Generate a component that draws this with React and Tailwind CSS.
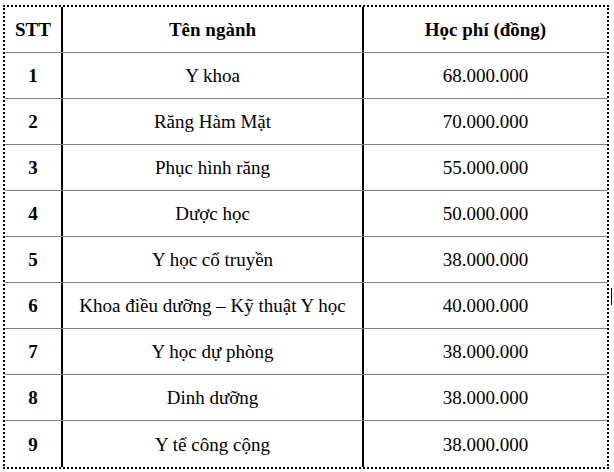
import React from 'react';

const rows = [
  ['1', 'Y khoa', '68.000.000'],
  ['2', 'Răng Hàm Mặt', '70.000.000'],
  ['3', 'Phục hình răng', '55.000.000'],
  ['4', 'Dược học', '50.000.000'],
  ['5', 'Y học cổ truyền', '38.000.000'],
  ['6', 'Khoa điều dưỡng – Kỹ thuật Y học', '40.000.000'],
  ['7', 'Y học dự phòng', '38.000.000'],
  ['8', 'Dinh dưỡng', '38.000.000'],
  ['9', 'Y tế công cộng', '38.000.000'],
];

const Row = ({ cells, bold, last }) => (
  <div className={`flex h-[46px] ${last ? '' : 'border-b border-[#808080]'}`}>
    <div className="w-[58px] border-r-2 border-black flex items-center justify-center pt-[2px] font-bold">
      {cells[0]}
    </div>
    <div className={`w-[301px] border-r-2 border-black flex items-center justify-center pt-[2px] ${bold ? 'font-bold' : ''}`}>
      {cells[1]}
    </div>
    <div className={`flex-1 flex items-center justify-center pt-[2px] ${bold ? 'font-bold' : ''}`}>
      {cells[2]}
    </div>
  </div>
);

export default function App() {
  return (
    <div className="relative w-[614px] h-[472px] bg-white pt-[5px] pl-[3px]">
      <div
        className="w-[606px] border-2 border-dotted border-black text-black text-[19px]"
        style={{ fontFamily: '"Liberation Serif", "Times New Roman", serif' }}
      >
        <Row cells={['STT', 'Tên ngành', 'Học phí (đồng)']} bold />
        {rows.map((r, i) => (
          <Row key={r[0]} cells={r} last={i === rows.length - 1} />
        ))}
      </div>
      {/* text cursor mark at the right edge */}
      <span className="absolute left-[611px] top-[288px] w-px h-[17px] bg-black" />
    </div>
  );
}
